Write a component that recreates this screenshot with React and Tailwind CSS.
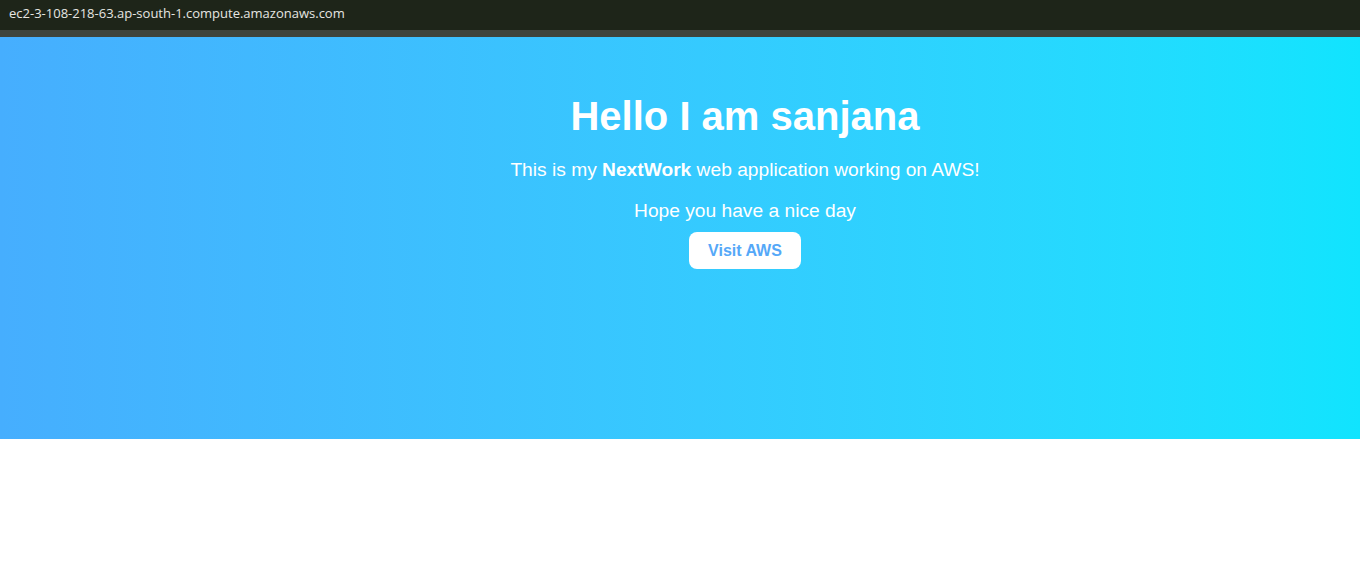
/**
 * @file App.jsx
 * @description NextWork hello page on EC2 — Tailwind recreation.
 */

const App = () => {
  return (
    <div className="min-h-screen bg-white font-['Liberation_Sans',Arial,sans-serif]">
      {/* ── Browser-ish title strip ── */}
      <div className="h-[30px] bg-[#1e2519] flex items-center pl-[9px]">
        <span className="text-[13px] text-[#e6e6e2] font-['Open_Sans','Noto_Sans',sans-serif] leading-none -mt-[4px]">
          ec2-3-108-218-63.ap-south-1.compute.amazonaws.com
        </span>
      </div>
      <div className="h-[7px] bg-[#3f443c]" />

      {/* ── Hero ── */}
      <section className="h-[402px] bg-gradient-to-r from-[#46aefe] to-[#10e4fe] text-white">
        <div className="flex flex-col items-center pl-[130px] pt-[56px]">
          <h1 className="text-[40px] font-bold leading-[46px]">Hello I am sanjana</h1>
          <p className="mt-[20px] text-[19.2px] leading-[22px]">
            This is my <strong className="font-bold">NextWork</strong> web application working on AWS!
          </p>
          <p className="mt-[19px] text-[19.2px] leading-[22px]">Hope you have a nice day</p>
          <a
            href="#"
            className="mt-[10px] h-[37px] px-[19px] flex items-center rounded-[8px] bg-white text-[#55a8f8] text-[16px] font-bold"
          >
            Visit AWS
          </a>
        </div>
      </section>
    </div>
  );
};

export default App;
